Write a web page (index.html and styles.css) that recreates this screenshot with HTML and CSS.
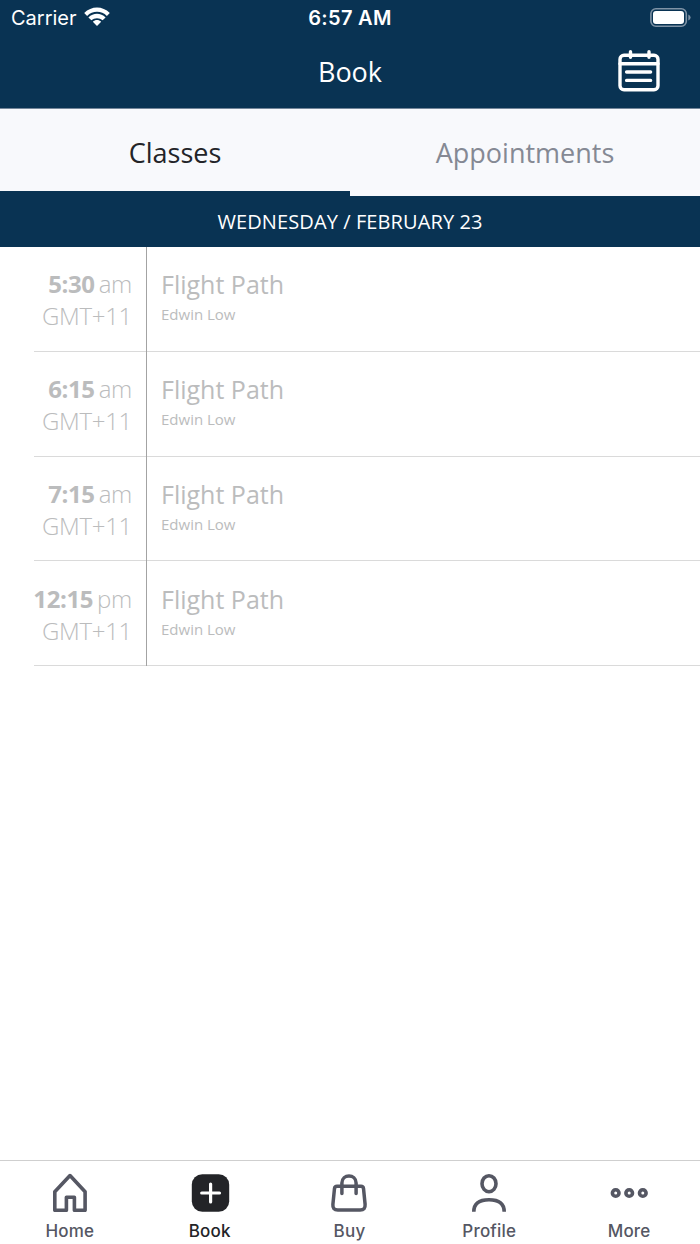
FILE: index.html
```html
<!DOCTYPE html>
<html lang="en">
<head>
<meta charset="utf-8">
<title>Book</title>
<link rel="stylesheet" href="styles.css">
</head>
<body>
<div class="app">
    <header class="header">
        <div class="status">
            <div class="carrier">
                <span>Carrier</span>
                <svg class="wifi" width="26" height="20" viewBox="0 0 26 20" fill="#fff">
                    <path d="M0.2 6C7.3-1.4 18.7-1.4 25.8 6L22.9 9C17.5 3.4 8.5 3.4 3.1 9Z"/>
                    <path d="M4.4 10.4C9.3 5.5 16.7 5.5 21.6 10.4L18.6 13.3C15.6 10.4 10.4 10.4 7.4 13.3Z"/>
                    <path d="M8.8 14.7C11.2 12.4 14.8 12.4 17.2 14.7L13 19Z"/>
                </svg>
            </div>
            <div class="clock">6:57 AM</div>
            <div class="power">
                <svg width="41" height="20" viewBox="0 0 41 20">
                    <rect x="0.9" y="0.8" width="35.4" height="17.4" rx="5" fill="none" stroke="#7f93a6" stroke-width="1.6"/>
                    <rect x="3" y="3" width="31" height="13" rx="3" fill="#fff"/>
                    <path d="M38.3 6.5Q40.6 7.3 40.6 9.5T38.3 12.5Z" fill="#7f93a6"/>
                </svg>
            </div>
        </div>
        <div class="titlebar">
            <span></span>
            <h1>Book</h1>
            <svg class="calendar" width="42" height="42" viewBox="0 0 42 42" fill="none" stroke="#fff" stroke-width="3.4" stroke-linecap="round">
                <rect x="2" y="5.2" width="38" height="34.6" rx="4"/>
                <path d="M2 13.8H40M12.5 1.8V7.2M31 1.8V7.2M8.6 22H32.6M8.6 30.4H32.6"/>
            </svg>
        </div>
    </header>

    <nav class="tabs">
        <div class="tab active"><span>Classes</span></div>
        <div class="tab"><span>Appointments</span></div>
    </nav>
    <div class="date"><span>WEDNESDAY / FEBRUARY 23</span></div>

    <main class="list">
        <div class="row">
            <div class="when">
                <div class="time"><b>5:30</b><span class="ampm">am</span></div>
                <div class="zone">GMT+11</div>
            </div>
            <div class="class">
                <div class="name">Flight Path</div>
                <div class="teacher">Edwin Low</div>
            </div>
        </div>
        <div class="row">
            <div class="when">
                <div class="time"><b>6:15</b><span class="ampm">am</span></div>
                <div class="zone">GMT+11</div>
            </div>
            <div class="class">
                <div class="name">Flight Path</div>
                <div class="teacher">Edwin Low</div>
            </div>
        </div>
        <div class="row">
            <div class="when">
                <div class="time"><b>7:15</b><span class="ampm">am</span></div>
                <div class="zone">GMT+11</div>
            </div>
            <div class="class">
                <div class="name">Flight Path</div>
                <div class="teacher">Edwin Low</div>
            </div>
        </div>
        <div class="row">
            <div class="when">
                <div class="time"><b>12:15</b><span class="ampm">pm</span></div>
                <div class="zone">GMT+11</div>
            </div>
            <div class="class">
                <div class="name">Flight Path</div>
                <div class="teacher">Edwin Low</div>
            </div>
        </div>
    </main>

    <footer class="nav">
        <div class="item">
            <svg width="40" height="40" viewBox="0 0 40 40" fill="none" stroke="#555763" stroke-width="3.6" stroke-linejoin="round">
                <path d="M4.8 38.3V19.8L20 3.6L35.1 19.8V38.3H24.4V25.3H16.4V38.3Z"/>
            </svg>
            <span>Home</span>
        </div>
        <div class="item current">
            <svg width="40" height="40" viewBox="0 0 40 40">
                <rect x="1.8" y="2.2" width="37.4" height="37.6" rx="10.5" fill="#232428"/>
                <path d="M11.7 21H29.5M20.6 12.1V29.9" stroke="#fff" stroke-width="3.2" stroke-linecap="round"/>
            </svg>
            <span>Book</span>
        </div>
        <div class="item">
            <svg width="40" height="40" viewBox="0 0 40 40" fill="none" stroke="#555763" stroke-width="3.5" stroke-linecap="round">
                <path d="M8 14.2H32Q34.2 14.2 34.5 16.4L36.1 32.3Q36.6 38 31.2 38H8.8Q3.4 38 3.9 32.3L5.5 16.4Q5.8 14.2 8 14.2Z"/>
                <path d="M12.9 21.5V11C12.9 1.6 27.1 1.6 27.1 11V21.5"/>
            </svg>
            <span>Buy</span>
        </div>
        <div class="item">
            <svg width="40" height="40" viewBox="0 0 40 40" fill="none" stroke="#555763" stroke-width="3.6">
                <ellipse cx="20" cy="11.7" rx="7" ry="8"/>
                <path d="M4.8 39.7C4.8 31 10.3 27.7 20 27.7S35.2 31 35.2 39.7"/>
            </svg>
            <span>Profile</span>
        </div>
        <div class="item">
            <svg width="40" height="40" viewBox="0 0 40 40" fill="none" stroke="#555763" stroke-width="3.6">
                <circle cx="6.7" cy="21" r="3.3"/>
                <circle cx="20.2" cy="21" r="3.3"/>
                <circle cx="33.8" cy="21" r="3.3"/>
            </svg>
            <span>More</span>
        </div>
    </footer>
</div>
</body>
</html>
```

FILE: styles.css
```css
* {
    box-sizing: border-box;
}
body {
    margin: 0;
    background: #fff;
    font-family: "Open Sans", sans-serif;
    white-space: nowrap;
}
.app {
    display: flex;
    flex-direction: column;
    height: 1244px;
    overflow: hidden;
}
svg {
    display: block;
    flex: none;
}

/* header */
.header {
    height: 109px;
    background: #093353;
    border-bottom: 1px solid #74869a;
    color: #fff;
}
.status {
    display: grid;
    grid-template-columns: 1fr auto 1fr;
    height: 36px;
    line-height: 36px;
    font-family: Inter, sans-serif;
    font-size: 20px;
}
.carrier {
    display: flex;
    padding-left: 11px;
    gap: 7px;
}
.wifi {
    margin-top: 7px;
}
.clock {
    font-weight: 600;
    letter-spacing: 0.3px;
}
.power {
    display: flex;
    justify-content: flex-end;
    padding: 8px 9px 0 0;
}
.titlebar {
    display: grid;
    grid-template-columns: 1fr auto 1fr;
    height: 72px;
}
.titlebar h1 {
    margin: 0;
    font-size: 27px;
    font-weight: 400;
    line-height: 71px;
}
.calendar {
    justify-self: end;
    margin: 14px 40px 0 0;
}

/* tabs */
.tabs {
    display: flex;
    height: 87px;
    background: #f8f9fc;
}
.tab {
    flex: 1;
    text-align: center;
    font-size: 27px;
    line-height: 88px;
    color: #858994;
}
.tab.active {
    color: #232428;
    border-bottom: 5px solid #093353;
}
.date {
    height: 51px;
    background: #093353;
    color: #fff;
    text-align: center;
    font-size: 20px;
    letter-spacing: 0.1px;
    line-height: 51px;
}

/* class list */
.list {
    flex: 1;
    padding-left: 34px;
    color: #bbbcbd;
}
.row {
    display: flex;
    height: 104.75px;
    border-bottom: 1px solid #dadada;
}
.when {
    width: 113px;
    margin-bottom: -1px;
    padding: 21.4px 14px 0 0;
    border-right: 1px solid #a3a3a3;
    font-size: 24px;
    line-height: 32px;
    font-weight: 300;
}
.time {
    display: flex;
    justify-content: flex-end;
    gap: 4px;
}
.time b {
    font-weight: 700;
    letter-spacing: -0.4px;
}
.ampm {
    letter-spacing: -0.3px;
}
.zone {
    text-align: right;
    letter-spacing: -0.3px;
}
.class {
    padding: 21.4px 0 0 14px;
}
.name {
    font-size: 25px;
    line-height: 32px;
}
.teacher {
    font-size: 15px;
    line-height: 29px;
}

/* bottom navigation */
.nav {
    display: flex;
    height: 84px;
    padding-right: 1px;
    border-top: 1px solid #cfcfcf;
    font-family: Inter, sans-serif;
}
.item {
    flex: 1;
    display: flex;
    flex-direction: column;
    align-items: center;
    padding-top: 11px;
    color: #555763;
    font-size: 17px;
    font-weight: 450;
    letter-spacing: 0.2px;
    line-height: 39px;
}
.item.current {
    color: #232428;
}
```
